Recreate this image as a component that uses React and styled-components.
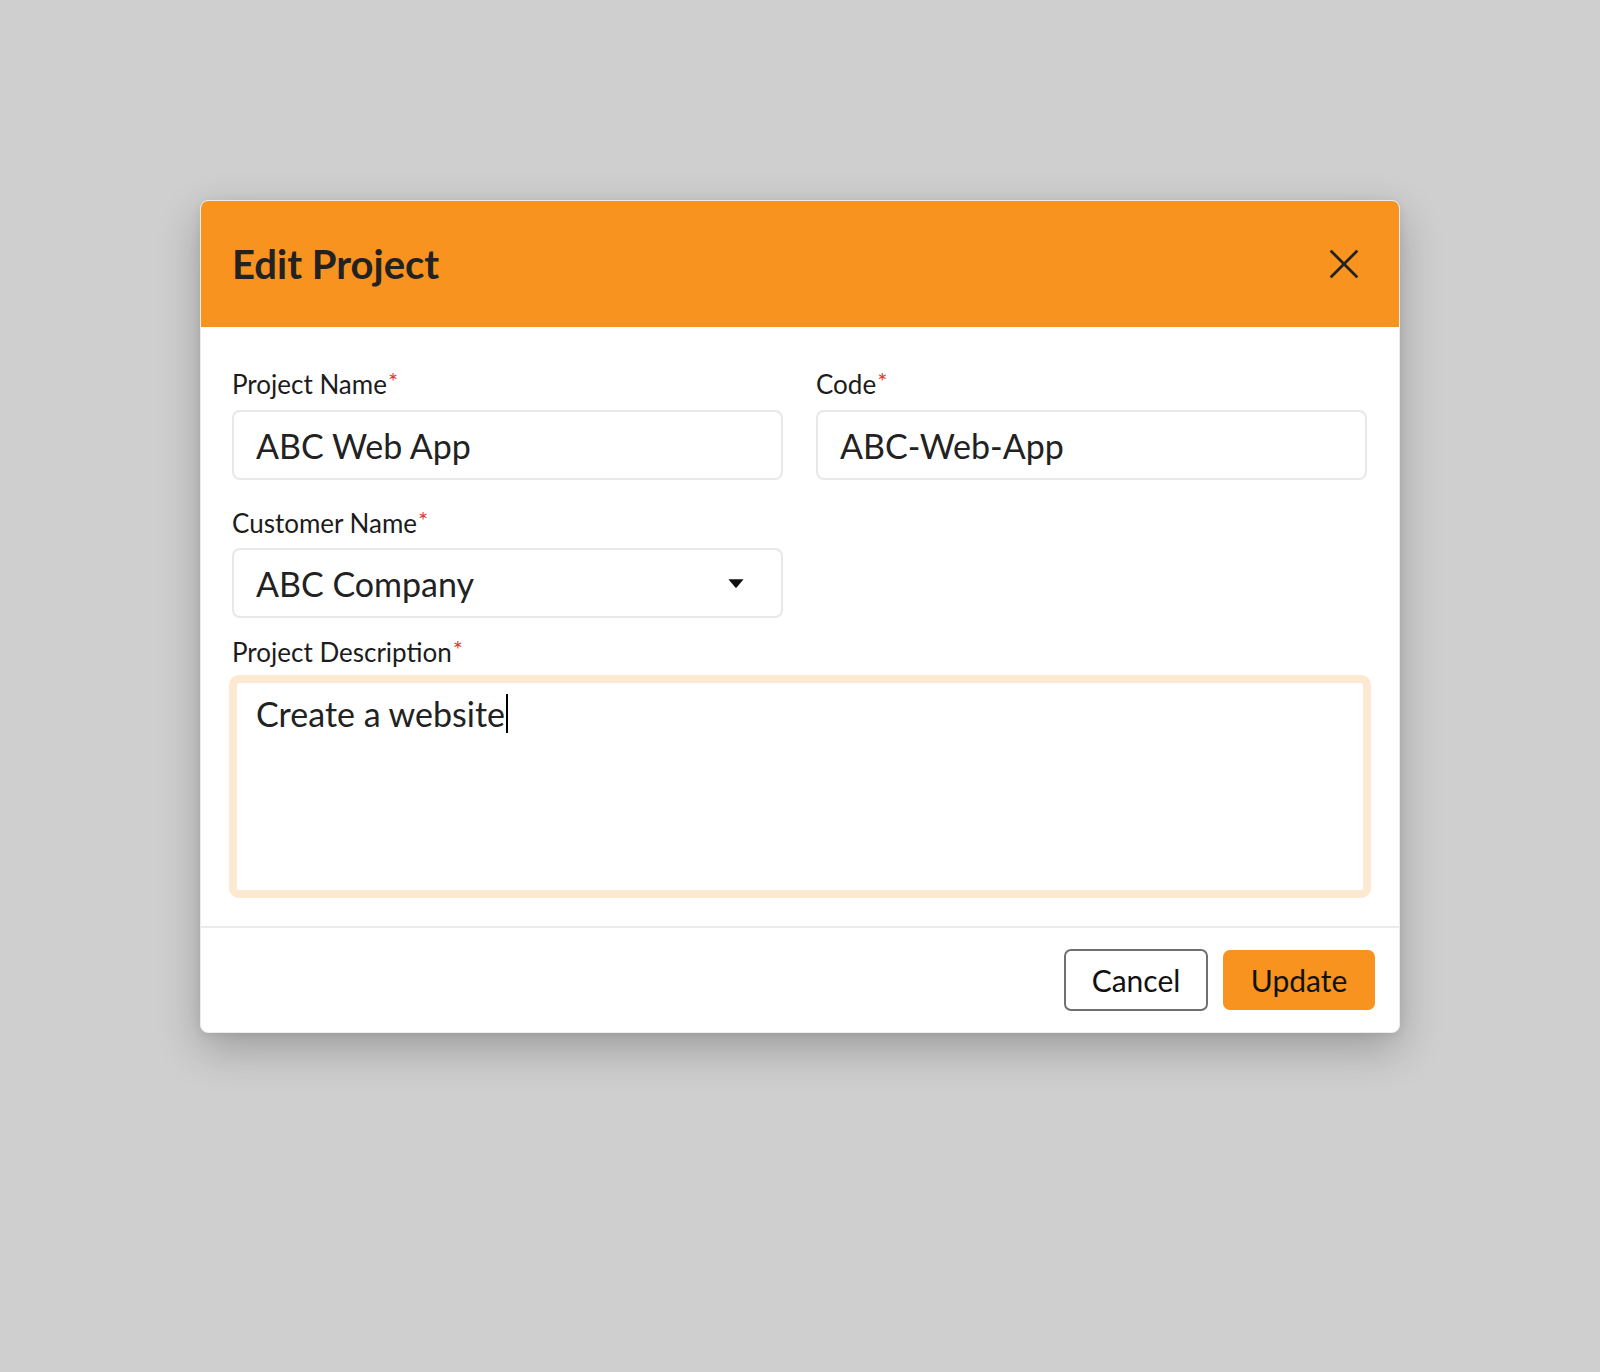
import React from "react";
import styled, { createGlobalStyle } from "styled-components";

const GlobalStyle = createGlobalStyle`
  html, body {
    margin: 0;
    padding: 0;
    background: #cfcfcf;
  }
  body {
    font-family: Lato, "Open Sans", Arial, sans-serif;
    color: #1c1c1c;
  }
  * { box-sizing: border-box; }
`;

const Page = styled.div`
  min-height: 1372px;
  padding-top: 200px;
  background: #cfcfcf;
`;

const Modal = styled.div`
  width: 1200px;
  margin: 0 auto;
  background: #ffffff;
  border: 1px solid #ececec;
  border-radius: 8px;
  overflow: hidden;
  box-shadow: 0 16px 44px rgba(0, 0, 0, 0.24), 0 2px 10px rgba(0, 0, 0, 0.08);
`;

const Header = styled.div`
  height: 126px;
  background: #f7931e;
  display: flex;
  align-items: center;
  justify-content: space-between;
  padding: 0 40px 0 31px;
`;

const Title = styled.h2`
  margin: 0;
  font-family: Lato, sans-serif;
  font-weight: 700;
  font-size: 40px;
  line-height: 48px;
  color: #222222;
`;

const CloseButton = styled.button`
  border: 0;
  background: transparent;
  padding: 0;
  width: 30px;
  height: 30px;
  display: flex;
  align-items: center;
  justify-content: center;
  cursor: pointer;
`;

const Body = styled.div`
  padding: 41px 32px 32px 31px;
`;

const Row = styled.div`
  display: grid;
  grid-template-columns: 551px 551px;
  column-gap: 33px;
  margin-bottom: ${(p) => p.$mb || 0}px;
`;

const Field = styled.div`
  display: flex;
  flex-direction: column;
`;

const Label = styled.label`
  font-family: Lato, sans-serif;
  font-size: 26px;
  line-height: 32px;
  color: #1c1c1c;
  margin-bottom: ${(p) => p.$mb || 10}px;
`;

const Required = styled.span`
  color: #e53935;
  font-size: 24px;
  vertical-align: top;
  line-height: 26px;
  margin-left: 1px;
`;

const TextInput = styled.input`
  width: 100%;
  height: 70px;
  border: 2px solid #e8e8e8;
  border-radius: 8px;
  padding: 0 22px;
  font-family: Lato, sans-serif;
  font-size: 34px;
  color: #222222;
  background: #ffffff;
  outline: none;
`;

const Select = styled.div`
  height: 70px;
  border: 2px solid #e8e8e8;
  border-radius: 8px;
  padding: 0 37px 0 22px;
  display: flex;
  align-items: center;
  justify-content: space-between;
  font-family: Lato, sans-serif;
  font-size: 34px;
  color: #222222;
  background: #ffffff;
`;

const TextArea = styled.div`
  margin-top: 1px;
  margin-left: 1px;
  height: 215px;
  border: 4px solid #fde8d2;
  box-shadow: 0 0 0 4px #fde8d2;
  border-radius: 6px;
  padding: 10px 19px;
  font-family: Lato, sans-serif;
  font-size: 34px;
  line-height: 41px;
  color: #222222;
  background: #ffffff;
`;

const Caret = styled.span`
  display: inline-block;
  width: 2px;
  height: 39px;
  background: #000000;
  vertical-align: -6px;
  margin-left: 1px;
`;

const Footer = styled.div`
  border-top: 2px solid #ebebeb;
  display: flex;
  justify-content: flex-end;
  align-items: center;
  gap: 15px;
  padding: 21px 24px 21px;
`;

const Button = styled.button`
  font-family: Lato, sans-serif;
  font-size: 30px;
  color: #111111;
  border-radius: 7px;
  cursor: pointer;
  display: flex;
  align-items: center;
  justify-content: center;
  padding: 0;
  width: ${(p) => (p.$primary ? 152 : 144)}px;
  height: ${(p) => (p.$primary ? 60 : 62)}px;
  background: ${(p) => (p.$primary ? "#f7931e" : "#ffffff")};
  border: ${(p) => (p.$primary ? "0" : "2px solid #707070")};
`;

const CloseIcon = () => (
  <svg width="30" height="30" viewBox="0 0 30 30" fill="none">
    <path d="M2.5 2.5 L27.5 27.5 M27.5 2.5 L2.5 27.5" stroke="#222" strokeWidth="2.8" strokeLinecap="round" />
  </svg>
);

const CaretDown = () => (
  <svg width="16" height="11" viewBox="0 0 16 11">
    <path d="M1 1.2 L15 1.2 Q15.6 1.2 15.2 1.8 L8.6 9.6 Q8 10.3 7.4 9.6 L0.8 1.8 Q0.4 1.2 1 1.2 Z" fill="#111" />
  </svg>
);

export default function App() {
  return (
    <>
      <GlobalStyle />
      <Page>
        <Modal>
          <Header>
            <Title>Edit Project</Title>
            <CloseButton aria-label="Close">
              <CloseIcon />
            </CloseButton>
          </Header>
          <Body>
            <Row $mb={27}>
              <Field>
                <Label>
                  Project Name<Required>*</Required>
                </Label>
                <TextInput readOnly defaultValue="ABC Web App" />
              </Field>
              <Field>
                <Label>
                  Code<Required>*</Required>
                </Label>
                <TextInput readOnly defaultValue="ABC-Web-App" />
              </Field>
            </Row>
            <Row $mb={18}>
              <Field>
                <Label $mb={9}>
                  Customer Name<Required>*</Required>
                </Label>
                <Select>
                  <span>ABC Company</span>
                  <CaretDown />
                </Select>
              </Field>
            </Row>
            <Field>
              <Label $mb={0}>
                Project Description<Required>*</Required>
              </Label>
              <TextArea role="textbox">
                Create a website<Caret />
              </TextArea>
            </Field>
          </Body>
          <Footer>
            <Button>Cancel</Button>
            <Button $primary>Update</Button>
          </Footer>
        </Modal>
      </Page>
    </>
  );
}
